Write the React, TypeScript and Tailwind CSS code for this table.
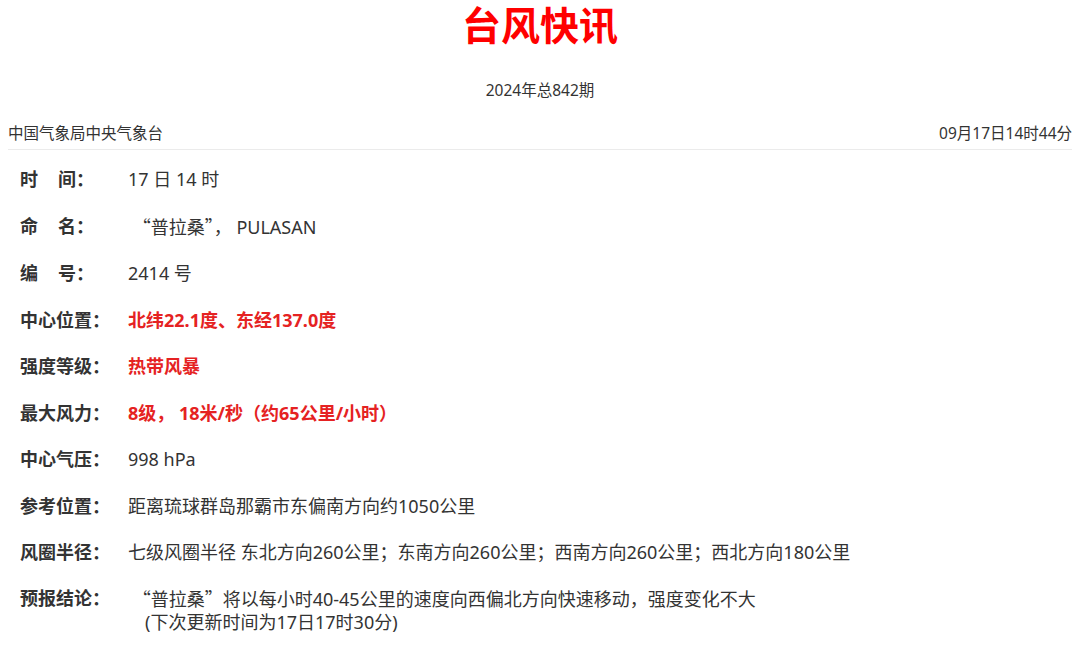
const Q = ({ children }: { children: React.ReactNode }) => (
  <span className="font-['Noto_Sans_CJK_SC',sans-serif]">{children}</span>
)

const rows: { label: React.ReactNode; value: React.ReactNode; red?: boolean }[] = [
  {
    label: (
      <>
        时<span className="inline-block w-[20px]" />间：
      </>
    ),
    value: "17 日 14 时",
  },
  {
    label: (
      <>
        命<span className="inline-block w-[20px]" />名：
      </>
    ),
    value: (
      <>
        {"\u00a0"}
        <Q>“</Q>普拉桑<Q>”</Q>，{"\u00a0"}PULASAN
      </>
    ),
  },
  {
    label: (
      <>
        编<span className="inline-block w-[20px]" />号：
      </>
    ),
    value: "2414 号",
  },
  { label: "中心位置：", value: "北纬22.1度、东经137.0度", red: true },
  { label: "强度等级：", value: "热带风暴", red: true },
  { label: "最大风力：", value: "8级， 18米/秒（约65公里/小时）", red: true },
  { label: "中心气压：", value: "998 hPa" },
  { label: "参考位置：", value: "距离琉球群岛那霸市东偏南方向约1050公里" },
  {
    label: "风圈半径：",
    value: "七级风圈半径 东北方向260公里；东南方向260公里；西南方向260公里；西北方向180公里",
  },
]

export default function App() {
  return (
    <div
      className="w-[1080px] h-[652px] bg-white text-[#333] overflow-hidden px-2"
      style={{ fontFamily: '"Noto Sans", "Noto Sans CJK SC", sans-serif' }}
    >
      <h1 className="text-center text-[39px] leading-[50px] font-bold text-[#f00]">台风快讯</h1>
      <p className="mt-[28px] text-center text-[15.5px] leading-6">2024年总842期</p>

      <div className="mt-[19px] pb-[4px] flex justify-between text-[15.5px] leading-6 border-b border-[#ebebeb]">
        <span>中国气象局中央气象台</span>
        <span>09月17日14时44分</span>
      </div>

      <div className="mt-[6px] pl-3 text-[18px]">
        {rows.map((r, i) => (
          <div key={i} className="flex py-[11px] leading-[24.5px]">
            <div className="w-[108px] shrink-0 font-bold">{r.label}</div>
            <div className={r.red ? "font-bold text-[#e52222]" : ""}>{r.value}</div>
          </div>
        ))}
        <div className="flex py-[11px] leading-[23px]">
          <div className="w-[108px] shrink-0 font-bold">预报结论：</div>
          <div>
            <div>
              {"\u00a0"}
              <Q>“</Q>普拉桑<Q>”</Q>将以每小时40-45公里的速度向西偏北方向快速移动，强度变化不大
            </div>
            <div className="pl-[17px]">(下次更新时间为17日17时30分)</div>
          </div>
        </div>
      </div>
    </div>
  )
}
